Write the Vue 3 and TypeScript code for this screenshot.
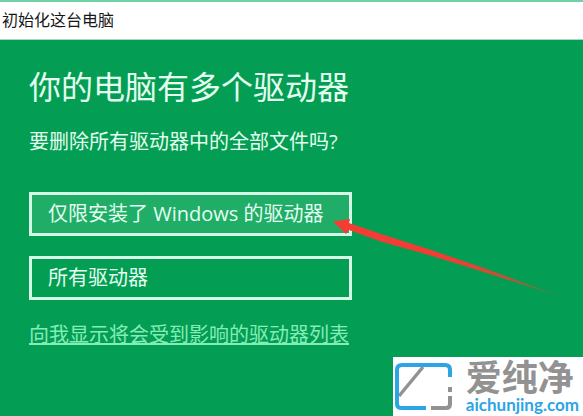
<script setup lang="ts">
import { ref } from 'vue'

type DriveScope = 'windows' | 'all'

const options: { id: DriveScope; label: string }[] = [
  { id: 'windows', label: '仅限安装了 Windows 的驱动器' },
  { id: 'all', label: '所有驱动器' },
]
const selected = ref<DriveScope>('windows')
</script>

<template>
  <div class="window">
    <header class="titlebar">初始化这台电脑</header>
    <main class="content">
      <h1>你的电脑有多个驱动器</h1>
      <p>要删除所有驱动器中的全部文件吗?</p>
      <div class="options">
        <button
          v-for="option in options"
          :key="option.id"
          type="button"
          :class="{ selected: selected === option.id }"
          @click="selected = option.id"
        >{{ option.label }}</button>
      </div>
      <a href="#drives">向我显示将会受到影响的驱动器列表</a>
    </main>

    <svg class="pointer" width="240" height="88" viewBox="0 0 240 88" aria-hidden="true">
      <defs>
        <linearGradient id="fade" x1="0" y1="0" x2="1" y2="0">
          <stop offset="0.45" stop-color="#f43c34" />
          <stop offset="0.75" stop-color="#c65136" />
          <stop offset="1" stop-color="#8b6a40" stop-opacity="0.3" />
        </linearGradient>
      </defs>
      <path d="M0 6.500 17 4 16 8 48 19 98 35 148 52 232 83 146 55.500 96 40 48 26.500 16 15 13 19Z" fill="url(#fade)" />
    </svg>

    <aside class="brand">
      <svg width="58" height="48" viewBox="0 0 58 48" aria-hidden="true">
        <path d="M4 33 28 4" fill="none" stroke="#929292" stroke-width="3.500" />
        <path d="M31 45H7Q2 45 2 41V7Q2 2 7 2H50Q55 2 55 7V14" fill="none" stroke="#2da5e5" stroke-width="4" />
        <path d="M55 24V29M55 33V41Q55 45 51 45H36" fill="none" stroke="#929292" stroke-width="4" />
      </svg>
      <div class="brand-text">
        <strong>爱纯净</strong>
        <span>aichunjing.com</span>
      </div>
    </aside>
  </div>
</template>

<style>
body {
  background: #039e53;
}
</style>

<style scoped>
.window {
  position: relative;
  box-sizing: border-box;
  min-height: 100vh;
  border-top: 2px solid #70d1a4;
  background: #039e53;
  color: #e4fff0;
  font-family: "Open Sans", "Noto Sans CJK SC", sans-serif;
}

.titlebar {
  height: 38px;
  box-sizing: border-box;
  padding: 0 2px;
  border-bottom: 1px solid #a2d9be;
  background: #fff;
  color: #161616;
  font-size: 16px;
  line-height: 36px;
}

.content {
  padding: 23px 29px;
}

h1 {
  margin: 0;
  font-size: 32px;
  font-weight: 400;
  line-height: 48px;
}

p {
  margin: 15px 0 34px;
  font-size: 20px;
  line-height: 32px;
}

.options {
  display: grid;
  gap: 20px;
  max-width: 323px;
  margin-bottom: 19px;
}

button {
  height: 44px;
  padding: 0 16px;
  border: 3px solid #d6f8e6;
  border-radius: 0;
  background: transparent;
  color: inherit;
  font: inherit;
  font-size: 20px;
  line-height: 36px;
  text-align: left;
  white-space: nowrap;
}

button.selected {
  background: #20ad68;
}

a {
  display: inline-block;
  color: #83edb7;
  font-size: 20px;
  line-height: 32px;
  text-decoration: underline;
  text-decoration-thickness: 2px;
  text-underline-offset: 1px;
}

.pointer {
  position: absolute;
  top: 213px;
  left: 333px;
}

.brand {
  position: absolute;
  right: 0;
  bottom: 0;
  display: flex;
  align-items: center;
  gap: 13px;
  box-sizing: border-box;
  height: 59px;
  padding: 0 4px 0 2px;
  background: #fff;
}

.brand-text {
  display: grid;
}

strong {
  color: #929292;
  font-size: 36px;
  font-weight: 700;
  line-height: 36px;
}

.brand-text span {
  color: #2da5e5;
  font-family: Lato, sans-serif;
  font-size: 17px;
  font-weight: 700;
  line-height: 18px;
}
</style>
